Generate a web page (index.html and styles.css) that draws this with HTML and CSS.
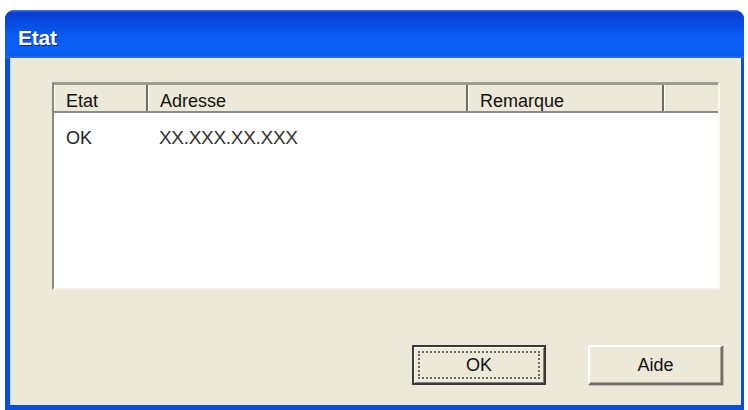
FILE: index.html
```html
<!DOCTYPE html>
<html lang="fr">
<head>
<meta charset="utf-8">
<title>Etat</title>
<link rel="stylesheet" href="styles.css">
</head>
<body>
<div class="window">
  <div class="titlebar"><span class="title">Etat</span></div>
  <div class="client">
    <div class="listview">
      <div class="header">
        <div class="hcell c-etat">Etat</div>
        <div class="hcell c-addr">Adresse</div>
        <div class="hcell c-rem">Remarque</div>
        <div class="hcell c-fill"></div>
      </div>
      <div class="row">
        <div class="cell c-etat">OK</div>
        <div class="cell c-addr">XX.XXX.XX.XXX</div>
        <div class="cell c-rem"></div>
      </div>
    </div>
    <div class="buttons">
      <button class="btn default"><span class="focus">OK</span></button>
      <button class="btn"><span class="label">Aide</span></button>
    </div>
  </div>
</div>
</body>
</html>
```
FILE: styles.css
```css
html, body {
  margin: 0;
  padding: 0;
  background: #ffffff;
  width: 748px;
  height: 410px;
  overflow: hidden;
}
body {
  padding: 10px 0 0 5px;
  box-sizing: border-box;
  font-family: "Liberation Sans", Arial, sans-serif;
}
.window {
  width: 739px;
  height: 400px;
  display: flex;
  flex-direction: column;
  background: #0a4fd8;
  border-radius: 9px 9px 0 0;
  overflow: hidden;
}
.titlebar {
  height: 48px;
  box-sizing: border-box;
  flex: none;
  display: flex;
  align-items: flex-start;
  padding: 16px 0 0 13px;
  background: linear-gradient(#3a7af5 0, #0a3ccc 6%, #0648dc 20%, #0a5cf2 55%, #0a60f4 85%, #0c5ae8 94%, #2c6ef0 100%);
}
.title {
  color: #ffffff;
  font-weight: bold;
  font-size: 21px;
  letter-spacing: -0.2px;
  text-shadow: 1px 1px 0 #0a2a9a;
}
.client {
  flex: 1;
  margin: 0 3px 5px 5px;
  background: #ece9d8;
  border-left: 1px solid #c8d4f0;
  padding: 24px 21px 0 41px;
  display: flex;
  flex-direction: column;
}
.listview {
  height: 208px;
  box-sizing: border-box;
  background: #ffffff;
  border-left: 2px solid #8a8a80;
  border-top: 1px solid #a0a090;
  border-right: 2px solid #f8f7f0;
  border-bottom: 2px solid #f4f2e8;
  display: flex;
  flex-direction: column;
}
.header {
  display: flex;
  height: 30px;
  box-sizing: border-box;
  background: #ece9d8;
  border-top: 2px solid #9a9a90;
  border-bottom: 2px solid #8c8c84;
}
.hcell {
  box-sizing: border-box;
  font-size: 18px;
  color: #111;
  line-height: 20px;
  padding: 6px 0 0 12px;
  border-right: 2px solid #6e6e66;
  box-shadow: inset 1px 0 0 #ffffff;
}
.c-etat { width: 94px; }
.c-addr { width: 320px; }
.c-rem { width: 196px; }
.c-fill { flex: 1; border-right: none; }
.row {
  display: flex;
  padding-top: 15px;
}
.cell {
  box-sizing: border-box;
  font-size: 18px;
  line-height: 20px;
  color: #222;
  padding-left: 12px;
}
.row .c-addr { padding-left: 11px; font-size: 19px; letter-spacing: -0.3px; color: #333; }
.buttons {
  display: flex;
  justify-content: flex-end;
  gap: 42px;
  margin-top: 55px;
  margin-right: -3px;
}
.btn {
  width: 135px;
  height: 40px;
  box-sizing: border-box;
  margin: 0;
  padding: 0;
  background: #ece9d8;
  font-family: "Liberation Sans", Arial, sans-serif;
  font-size: 18px;
  color: #111;
  border: 2px solid;
  border-color: #ffffff #6e6e66 #6e6e66 #ffffff;
  box-shadow: inset -1px -1px 0 #a8a898, 1px 1px 0 #c0bdb0;
  display: flex;
  align-items: center;
  justify-content: center;
}
.btn.default {
  width: 134px;
  border: 2px solid #3a3a36;
  box-shadow: inset 1px 1px 0 #ffffff, inset -1px -1px 0 #808078;
  padding: 4px;
}
.focus {
  flex: 1;
  align-self: stretch;
  display: flex;
  align-items: center;
  justify-content: center;
  border: 2px dotted #6a6a62;
}
.label {
  padding-top: 1px;
}
```
